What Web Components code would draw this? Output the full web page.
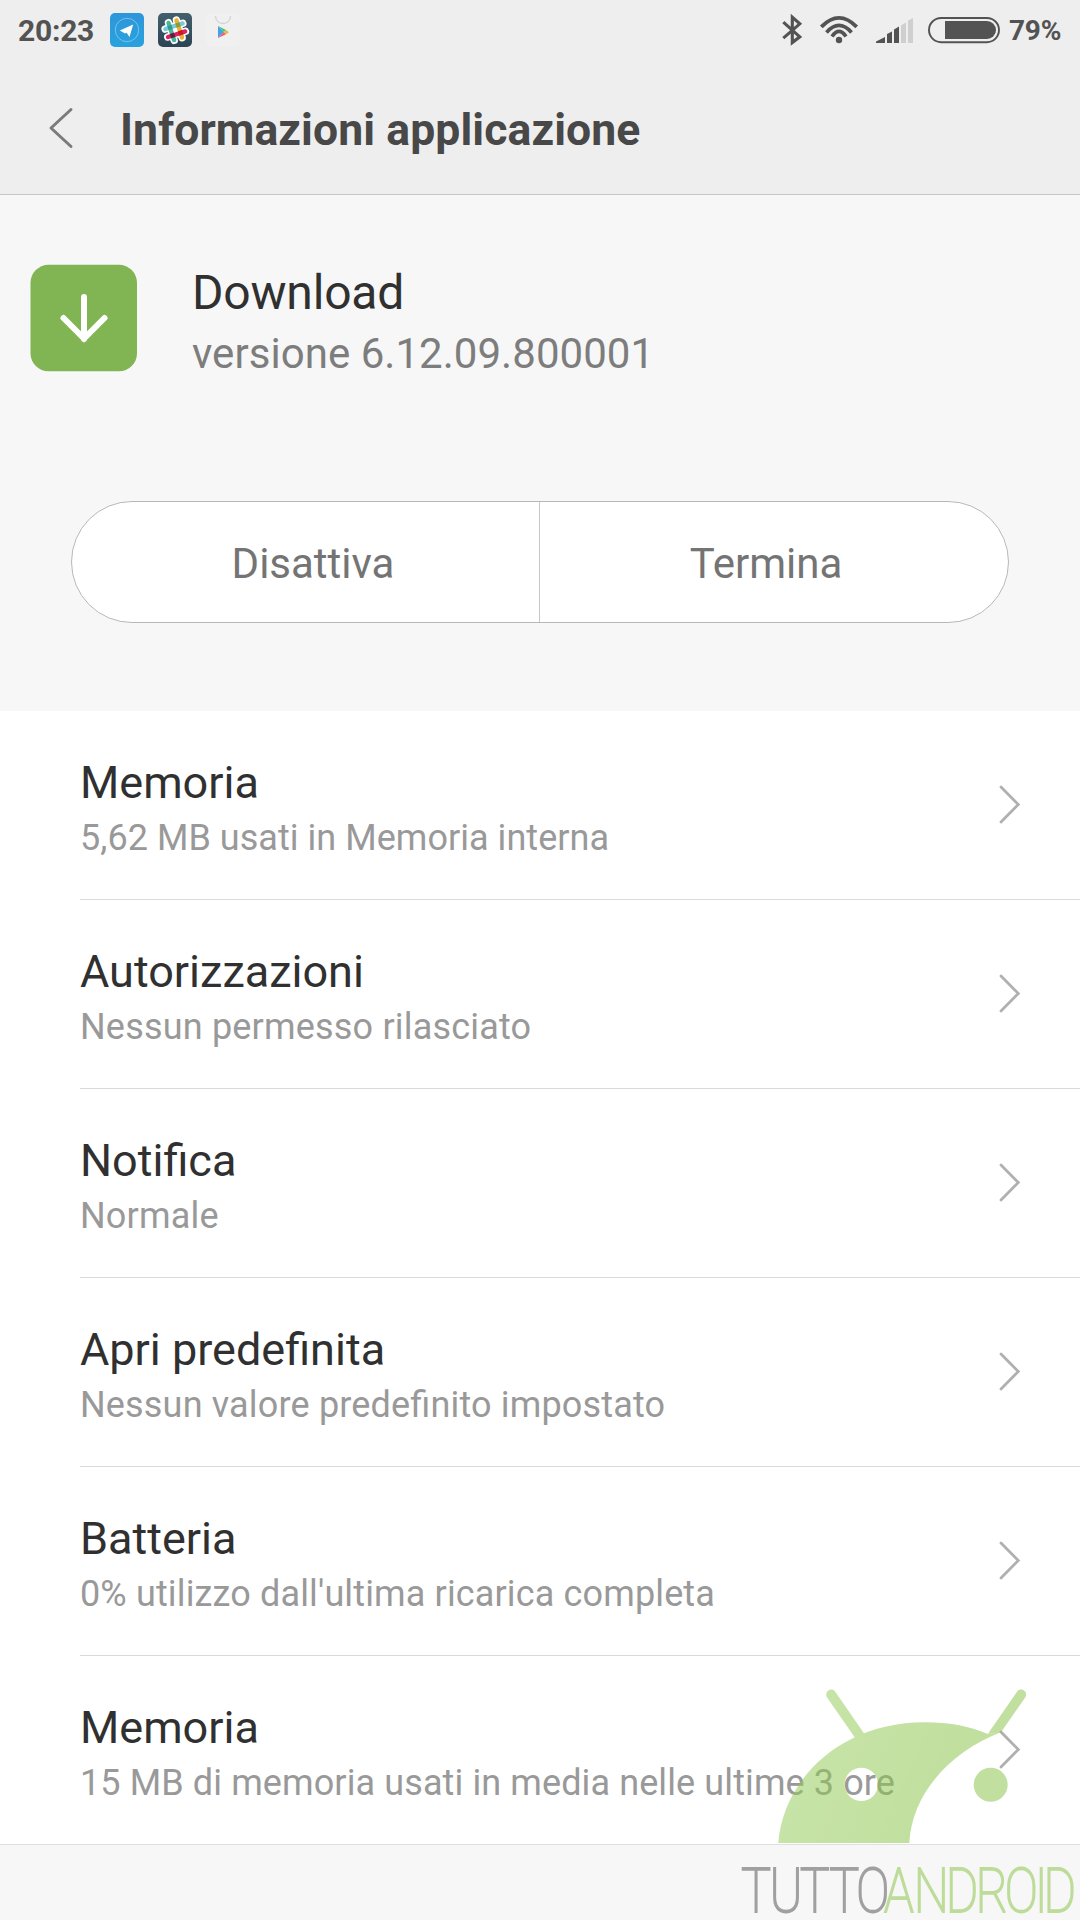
<!DOCTYPE html>
<html lang="it">
<head>
<meta charset="utf-8">
<title>Informazioni applicazione</title>
<style>
html,body{margin:0;padding:0}
body{width:1080px;height:1920px;overflow:hidden;background:#f7f7f7;font-family:Roboto,"Noto Sans",sans-serif;font-feature-settings:"liga" 1}
</style>
</head>
<body>
<app-info-screen></app-info-screen>
<script>
const define=(name,html)=>customElements.define(name,class extends HTMLElement{
  constructor(){
    super();
    const t=document.createElement('template');
    t.innerHTML=html;
    this.attachShadow({mode:'open'}).append(t.content.cloneNode(true));
  }
});

define('status-bar',`
<style>
:host{display:flex;height:60px;align-items:flex-start;justify-content:space-between;color:#535353;font-weight:700}
svg{display:block}
.left,.right{display:flex;align-items:flex-start}
.time{font-size:30px;line-height:62px;padding-left:18px;width:92px;letter-spacing:-.25px}
.pct{font-size:28px;line-height:61px;width:71px;letter-spacing:-.2px}
</style>
<div class="left"><span class="time">20:23</span>
<svg width="140" height="60" viewBox="110 0 140 60">
  <defs><linearGradient id="sl" x1="0" y1="0" x2="0" y2="1"><stop offset="0" stop-color="#43606f"/><stop offset="1" stop-color="#2c4453"/></linearGradient>
  <linearGradient id="tg" x1="0" y1="0" x2="0" y2="1"><stop offset="0" stop-color="#2e96da"/><stop offset="1" stop-color="#28a2df"/></linearGradient></defs>
  <rect x="110" y="13" width="34" height="34" rx="5" fill="url(#tg)"/>
  <circle cx="127" cy="30" r="11.7" fill="none" stroke="#8cc9ec" stroke-width=".8"/>
  <path d="M119.8 30.6L133.2 24.6L129.5 37L126.6 32.8L125 33.6Z" fill="#fff"/>
  <rect x="158" y="13" width="34" height="34" rx="5" fill="url(#sl)"/>
  <g transform="translate(175.300 30.200) rotate(-18)" stroke-linecap="round" fill="none">
    <path d="M-4.200 -9.300V9.300M4.200 -9.300V9.300M-9.300 -4.200H9.300M-9.300 4.200H9.300" stroke="#fff" stroke-width="7.400"/>
    <g stroke-width="4.400">
    <path d="M-4.200 -9V9" stroke="#45b995"/><path d="M4.200 -9V9" stroke="#edb12e"/>
    <path d="M-9 -4.200H9" stroke="#79cbd8"/><path d="M-9 4.200H9" stroke="#dd2163"/>
    </g>
    <g stroke="none"><rect x="-6.400" y="-6.400" width="4.400" height="4.400" fill="#319a8c"/><rect x="2" y="-6.400" width="4.400" height="4.400" fill="#8a9c36"/>
    <rect x="-6.400" y="2" width="4.400" height="4.400" fill="#5b2147"/><rect x="2" y="2" width="4.400" height="4.400" fill="#c21c28"/><rect x="-1.800" y="-1.800" width="3.600" height="3.600" fill="#fff"/></g>
  </g>
  <rect x="206" y="13" width="34" height="34" rx="5" fill="#f0f0f0"/>
  <path d="M215.500 16C215.500 26 230.500 26 230.500 16" fill="none" stroke="#d3d3d3" stroke-width="1.300"/>
  <path d="M218 26V38L223.800 32Z" fill="#4a9fe8"/><path d="M218 26L226 30L223.800 32Z" fill="#2fd077"/>
  <path d="M218 38L226 34.200L223.800 32Z" fill="#ef5b67"/><path d="M226 30L229 32.200L226 34.200L223.800 32Z" fill="#f3ad4b"/>
</svg></div>
<div class="right">
<svg width="229" height="60" viewBox="780 0 229 60" fill="none" stroke="#535353">
  <path d="M783.300 22.200L799.800 36.800L792.300 42.600V17.200L799.800 23.800L783.300 38.200" stroke-width="3.100"/>
  <g stroke-width="3.800"><path d="M821.300 26.800Q839 8.800 856.700 26.800"/><path d="M826.500 32.400Q839 18.400 851.500 32.400"/><path d="M832 36.500Q839 26.400 846 36.500"/></g>
  <circle cx="839" cy="40" r="3.200" fill="#535353" stroke="none"/>
  <g stroke="none"><path d="M876 43V41.500L885 37V43ZM887 43V34L892 31.500V43ZM894 43V29.500L899 26.500V43Z" fill="#535353"/><path d="M901 43V25.500L906 22.500V43ZM908 43V20.500L913 18V43Z" fill="#cfcfcf"/></g>
  <rect x="929" y="18" width="70" height="24.200" rx="12.100" stroke-width="1.900"/>
  <path d="M945 21H987A9 9 0 0 1 987 39H945Z" fill="#535353" stroke="none"/>
</svg><span class="pct">79%</span></div>`);

define('title-bar',`
<style>
:host{display:flex;height:134px;align-items:flex-start;border-bottom:1px solid #c6c6c6;color:#484848}
svg{display:block;flex:none}
h1{margin:0;font-size:44.5px;font-weight:700;line-height:140px;letter-spacing:.1px;white-space:nowrap}
</style>
<svg width="120" height="134" viewBox="0 60 120 134"><path d="M71 109.500L51 128L71 146.500" fill="none" stroke="#7b7b7b" stroke-width="3" stroke-linecap="round" stroke-linejoin="round"/></svg>
<h1><slot></slot></h1>`);

define('app-header',`
<style>
:host{display:flex;padding:69px 0 0 30px;height:237px;box-sizing:border-box}
svg{display:block;flex:none;margin-right:55px}
.name{font-size:48px;line-height:58px;color:#303030;letter-spacing:-.2px}
.ver{font-size:42px;line-height:64px;color:#7d7d7d;letter-spacing:.04px}
.t{display:flex;flex-direction:column;white-space:nowrap}
</style>
<svg width="107" height="108" viewBox="30 264 107 108"><rect x="30.500" y="264.800" width="106.500" height="106.500" rx="18" fill="#81b453"/><path d="M84 297V339M63.500 318L84 338.500L104.500 318" fill="none" stroke="#fff" stroke-width="6" stroke-linecap="round"/></svg>
<div class="t"><span class="name"><slot name="name"></slot></span><span class="ver"><slot></slot></span></div>`);

define('split-actions',`
<style>
:host{display:flex;margin:69px 71px 88px;height:122px;box-sizing:border-box;border:1px solid #b8b8b8;border-radius:61px;background:#fff;overflow:hidden}
div{flex:1;text-align:center;font-size:42px;line-height:123px;color:#747474}
.a{padding-left:15px;border-right:1px solid #c6c6c6}.b{padding-right:16px}
</style><div class="a"><slot name="first"></slot></div><div class="b"><slot name="second"></slot></div>`);

define('setting-row',`
<style>
:host{display:flex;box-sizing:border-box;height:189px;margin-left:80px;border-bottom:1px solid #d9d9d9;justify-content:space-between}
:host([last]){margin-left:0;padding-left:80px;border-color:#e0e0e0}
.t{display:flex;flex-direction:column;padding-top:43px;white-space:nowrap}
.h{font-size:45px;line-height:58px;color:#303030}
.s{font-size:36px;line-height:52px;color:#999;letter-spacing:var(--fit,.13px)}
svg{display:block;flex:none}
</style>
<div class="t"><span class="h"><slot name="title"></slot></span><span class="s"><slot></slot></span></div>
<svg width="81" height="188" viewBox="999 711 81 188"><path d="M1001 787L1018.300 804.500L1001 822" fill="none" stroke="#b0b0b0" stroke-width="2.800" stroke-linecap="round"/></svg>`);

define('site-watermark',`
<style>
:host{position:absolute;right:0;bottom:0;width:360px;height:260px;pointer-events:none}
svg{display:block;overflow:visible}
text{font-family:Roboto,sans-serif;font-weight:100;font-size:62px}
</style>
<svg width="360" height="260" viewBox="720 1660 360 260">
<defs><linearGradient id="g" gradientUnits="userSpaceOnUse" x1="800" y1="1740" x2="940" y2="1800"><stop offset="0" stop-color="#96cd5a"/><stop offset="1" stop-color="#89c346"/></linearGradient></defs>
<g opacity=".52" fill="url(#g)">
<path fill-rule="evenodd" d="M778.300 1843C783 1780 840 1722.300 925 1722.300C948 1722.300 969 1726 988 1734L1000 1732.600C955 1750 912 1790 909.300 1843ZM844.600 1784.400a16.700 16.700 0 1 0 33.400 0a16.700 16.700 0 1 0 -33.400 0Z"/>
<path d="M826.900 1697.200A5 5 0 0 1 835.100 1691.500L864.500 1734L855.500 1738.500Z"/>
<path d="M1025.400 1697.200A5 5 0 0 0 1017.200 1691.500L987.800 1734L1000.600 1732.700Z"/>
<circle cx="990.700" cy="1784.700" r="17"/>
</g>
<g transform="translate(0 1911.700) scale(.8 1)" stroke-width="2.100">
<text x="926.500 962 1000 1036.900 1070.400" y="0" fill="#a0a0a0" stroke="#a0a0a0">TUTTO</text>
<text x="1105 1142.100 1182.100 1219.600 1255.900 1293.500 1304.300" y="0" fill="#bddc99" stroke="#bddc99">ANDROID</text>
</g>
</svg>`);

define('app-info-screen',`
<style>
:host{display:flex;flex-direction:column;position:relative;width:1080px;height:1920px;background:#f7f7f7;overflow:hidden}
header{background:#eee}
main{display:flex;flex-direction:column;background:#fff}
</style>
<header><status-bar></status-bar><title-bar>Informazioni applicazione</title-bar></header>
<app-header><span slot="name">Download</span>versione 6.12.09.800001</app-header>
<split-actions><span slot="first">Disattiva</span><span slot="second">Termina</span></split-actions>
<main>
<setting-row style="--fit:.04px"><span slot="title">Memoria</span>5,62 MB usati in Memoria interna</setting-row>
<setting-row style="--fit:.19px"><span slot="title">Autorizzazioni</span>Nessun permesso rilasciato</setting-row>
<setting-row style="--fit:.18px"><span slot="title">Notifica</span>Normale</setting-row>
<setting-row style="--fit:.17px"><span slot="title">Apri predefinita</span>Nessun valore predefinito impostato</setting-row>
<setting-row style="--fit:.14px"><span slot="title">Batteria</span>0% utilizzo dall'ultima ricarica completa</setting-row>
<setting-row last style="--fit:.11px"><span slot="title">Memoria</span>15 MB di memoria usati in media nelle ultime 3 ore</setting-row>
</main>
<site-watermark></site-watermark>`);
</script>
</body>
</html>
